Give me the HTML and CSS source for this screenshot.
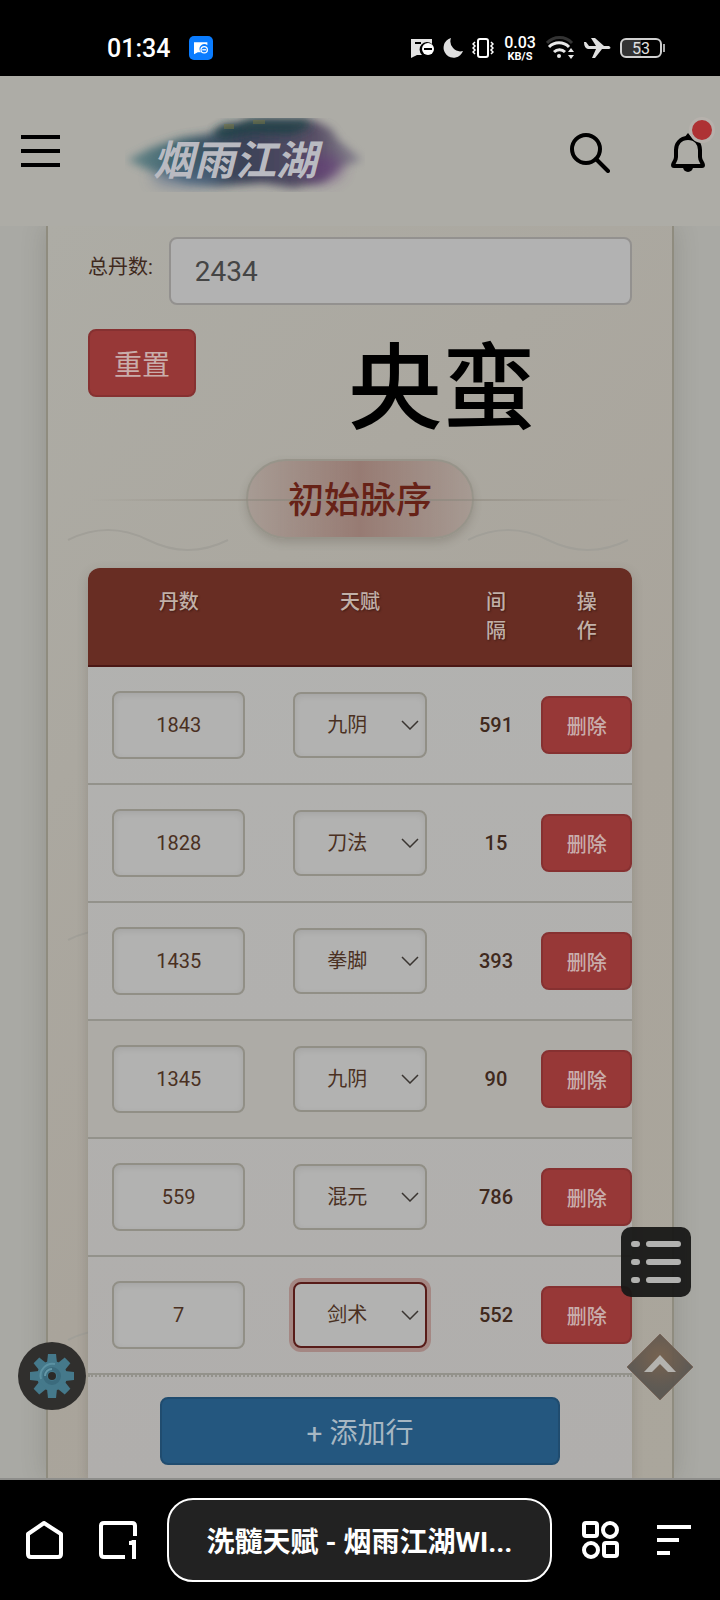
FILE: index.html
```
<!DOCTYPE html>
<html lang="zh-CN">
<head>
    <meta charset="UTF-8">
    <meta name="viewport" content="width=device-width, initial-scale=1.0">
    <title>洗髓天赋 - 烟雨江湖WIKI</title>
    <link rel="stylesheet" href="styles.css">
</head>
<body>
    <div class="status-bar">
        <span class="clock">01:34</span>
        <span class="app-badge">
            <svg width="14" height="13" viewBox="0 0 22 20">
                <path d="M0 0h21v5a7 7 0 0 0-10 11H6l-6 3z" fill="#fff"/>
                <circle cx="16" cy="12" r="5" fill="none" stroke="#fff" stroke-width="2"/>
                <path d="M13 12h6" stroke="#fff" stroke-width="2"/>
            </svg>
        </span>
        <div class="status-icons">
            <svg width="23" height="20" viewBox="0 0 23 20">
                <path d="M0 1h21v5a7 7 0 0 0-10 11H6l-6 3z" fill="#e4e4e4"/>
                <path d="M4 5h6" stroke="#000" stroke-width="2"/>
                <circle cx="17" cy="11" r="6" fill="#fff"/>
                <path d="M13 11h8" stroke="#000" stroke-width="2"/>
            </svg>
            <svg width="20" height="20" viewBox="0 0 20 20">
                <path d="M8 0A10 10 0 1 0 20 13 10 10 0 0 1 8 0z" fill="#e0e0e0"/>
            </svg>
            <svg width="22" height="20" viewBox="0 0 22 20" fill="none" stroke="#fff">
                <rect x="6" y="1" width="10" height="18" rx="2" stroke-width="2"/>
                <path d="M3 4l-2 2 2 2-2 2 2 2-2 2 2 2M19 4l2 2-2 2 2 2-2 2 2 2-2 2" stroke-width="1.5"/>
            </svg>
            <span class="speed"><b>0.03</b><small>KB/S</small></span>
            <svg width="29" height="24" viewBox="0 0 29 24" fill="none">
                <path d="M1 7a17 17 0 0 1 25 0" stroke="#333" stroke-width="3"/>
                <path d="M3 11a14 14 0 0 1 20 0M8 16a8 8 0 0 1 11 0" stroke="#e8e8e8" stroke-width="3"/>
                <circle cx="13" cy="20" r="2" fill="#e8e8e8"/>
                <path d="M22 16l3-4 3 4zM22 19h6l-3 4z" fill="#e8e8e8"/>
            </svg>
            <svg width="27" height="22" viewBox="0 0 27 22">
                <path d="M0 5l2 0 3 4h7L7 1h4l9 8h5q3 2 0 3h-7l-7 9H8l4-9H4Q0 11 0 5z" fill="#e0e0e0"/>
            </svg>
            <span class="battery">53</span>
        </div>
    </div>

    <header class="site-header">
        <button class="icon-btn menu-btn" aria-label="菜单">
            <svg width="39" height="34" viewBox="0 0 39 34" stroke="#000" stroke-width="4">
                <path d="M0 3h39M0 17h39M0 31h39"/>
            </svg>
        </button>
        <a class="logo" href="#">
            <svg width="240" height="74" viewBox="0 0 240 74">
                <defs>
                    <linearGradient id="ink" x1="0" x2="1">
                        <stop offset="0" stop-color="#5f8286"/>
                        <stop offset=".2" stop-color="#2d5966"/>
                        <stop offset=".5" stop-color="#292f4b"/>
                        <stop offset=".8" stop-color="#4a3f5b"/>
                        <stop offset="1" stop-color="#8a8792"/>
                    </linearGradient>
                    <filter id="soft" x="-10%" y="-20%" width="120%" height="140%">
                        <feGaussianBlur stdDeviation="4"/>
                    </filter>
                    <filter id="softer" x="-50%" y="-50%" width="200%" height="200%">
                        <feGaussianBlur stdDeviation="7"/>
                    </filter>
                </defs>
                <path d="M2 42l24-12 30-10 28-4 20-9 36-4h50l16 8 8 12 24 19-24 8-16 14-30 6-30-5-42 3-34-4-34-10z" fill="url(#ink)" opacity=".85" filter="url(#soft)"/>
                <ellipse cx="62" cy="60" rx="36" ry="9" fill="#55698a" opacity=".6" filter="url(#softer)"/>
                <ellipse cx="196" cy="50" rx="22" ry="14" fill="#653b78" opacity=".6" filter="url(#softer)"/>
                <path d="M88 14l12-8 10 2 14-7h58l4 8-20 8-40-2-30 6z" fill="#1f4044" opacity=".8" filter="url(#soft)"/>
                <path d="M99 6h10v5h-10zM128 2h12v4h-12z" fill="#77753f" opacity=".5"/>
                <text class="logo-text" x="28" y="57">烟雨江湖</text>
            </svg>
        </a>
        <div class="header-actions">
            <button class="icon-btn" aria-label="搜索">
                <svg width="40" height="40" viewBox="0 0 40 40" fill="none" stroke="#000" stroke-width="4" stroke-linecap="round">
                    <circle cx="16" cy="16" r="14"/>
                    <path d="M26 26l12 12"/>
                </svg>
            </button>
            <button class="icon-btn bell" aria-label="通知">
                <svg width="36" height="40" viewBox="0 0 36 40">
                    <path d="M18 0l4 5h-8z"/>
                    <path d="M18 5C10 5 6 11 6 17v7c0 4-3 6-3 8 0 1 0 1 1 1h28c1 0 1 0 1-1 0-2-3-4-3-8v-7c0-6-4-12-12-12z" fill="none" stroke="#000" stroke-width="4"/>
                    <path d="M13 34h10a5 5 0 0 1-10 0z"/>
                </svg>
                <span class="dot"></span>
            </button>
        </div>
    </header>

    <main class="content">
        <div class="panel">
            <svg class="waves">
                <defs>
                    <pattern id="wave" x="0" y="234" width="400" height="400" patternUnits="userSpaceOnUse">
                        <path d="M20 80Q60 60 100 80T180 80" fill="none" stroke="#a19f98" stroke-width="2"/>
                    </pattern>
                </defs>
                <rect width="100%" height="100%" fill="url(#wave)"/>
            </svg>

            <div class="total-row">
                <label for="total">总丹数:</label>
                <input type="text" id="total" value="2434">
            </div>
            <div class="reset-row">
                <button class="btn btn-danger">重置</button>
                <span class="mark">央蛮</span>
            </div>

            <div class="section-title">
                <h2>初始脉序</h2>
            </div>

            <div class="table-card">
                <table>
                    <colgroup>
                        <col class="wide"><col class="wide"><col><col>
                    </colgroup>
                    <thead>
                        <tr><th>丹数</th><th>天赋</th><th>间<br>隔</th><th>操<br>作</th></tr>
                    </thead>
                    <tbody>
                        <tr>
                            <td><input type="text" aria-label="丹数" value="1843"></td>
                            <td><div class="select"><select aria-label="天赋"><option>九阴</option></select><svg viewBox="0 0 18 10"><path d="M1 1l8 8 8-8"/></svg></div></td>
                            <td class="gap">591</td>
                            <td class="action"><button class="btn-delete">删除</button></td>
                        </tr>
                        <tr>
                            <td><input type="text" aria-label="丹数" value="1828"></td>
                            <td><div class="select"><select aria-label="天赋"><option>刀法</option></select><svg viewBox="0 0 18 10"><path d="M1 1l8 8 8-8"/></svg></div></td>
                            <td class="gap">15</td>
                            <td class="action"><button class="btn-delete">删除</button></td>
                        </tr>
                        <tr>
                            <td><input type="text" aria-label="丹数" value="1435"></td>
                            <td><div class="select"><select aria-label="天赋"><option>拳脚</option></select><svg viewBox="0 0 18 10"><path d="M1 1l8 8 8-8"/></svg></div></td>
                            <td class="gap">393</td>
                            <td class="action"><button class="btn-delete">删除</button></td>
                        </tr>
                        <tr class="tinted">
                            <td><input type="text" aria-label="丹数" value="1345"></td>
                            <td><div class="select"><select aria-label="天赋"><option>九阴</option></select><svg viewBox="0 0 18 10"><path d="M1 1l8 8 8-8"/></svg></div></td>
                            <td class="gap">90</td>
                            <td class="action"><button class="btn-delete">删除</button></td>
                        </tr>
                        <tr>
                            <td><input type="text" aria-label="丹数" value="559"></td>
                            <td><div class="select"><select aria-label="天赋"><option>混元</option></select><svg viewBox="0 0 18 10"><path d="M1 1l8 8 8-8"/></svg></div></td>
                            <td class="gap">786</td>
                            <td class="action"><button class="btn-delete">删除</button></td>
                        </tr>
                        <tr>
                            <td><input type="text" aria-label="丹数" value="7"></td>
                            <td><div class="select active"><select aria-label="天赋"><option>剑术</option></select><svg viewBox="0 0 18 10"><path d="M1 1l8 8 8-8"/></svg></div></td>
                            <td class="gap">552</td>
                            <td class="action"><button class="btn-delete">删除</button></td>
                        </tr>
                    </tbody>
                </table>
                <div class="add-row">
                    <button class="btn btn-add">+ 添加行</button>
                </div>
            </div>
        </div>

        <!-- floating buttons -->
        <button class="float settings" aria-label="设置">
            <svg width="44" height="44" viewBox="0 0 44 44">
                <g fill="#45798b">
                    <circle cx="22" cy="22" r="15"/>
                    <path id="tooth" d="M18 0h8l1 9H17z"/>
                    <use href="#tooth" transform="rotate(45 22 22)"/>
                    <use href="#tooth" transform="rotate(90 22 22)"/>
                    <use href="#tooth" transform="rotate(135 22 22)"/>
                    <use href="#tooth" transform="rotate(180 22 22)"/>
                    <use href="#tooth" transform="rotate(225 22 22)"/>
                    <use href="#tooth" transform="rotate(270 22 22)"/>
                    <use href="#tooth" transform="rotate(315 22 22)"/>
                </g>
                <path d="M11 25a12 12 0 0 1 14-15" fill="none" stroke="#5b91a2" stroke-width="2"/>
                <circle cx="22" cy="22" r="7" fill="none" stroke="#3b6b7d" stroke-width="4"/>
                <path d="M15 22a7 7 0 0 1 7-7" fill="none" stroke="#6397a7" stroke-width="2"/>
                <circle cx="22" cy="22" r="4" fill="#2b2a28"/>
            </svg>
        </button>
        <button class="float toc" aria-label="目录">
            <svg width="50" height="42" viewBox="0 0 50 42" stroke="#b2b2b0" stroke-width="6" stroke-linecap="round">
                <path d="M3 3h3M18 3h29M3 21h3M18 21h29M3 39h3M18 39h29"/>
            </svg>
        </button>
        <button class="float to-top" aria-label="返回顶部">
            <svg width="68" height="68" viewBox="0 0 68 68">
                <defs>
                    <radialGradient id="diamond" cx=".5" cy=".35" r=".5">
                        <stop offset="0" stop-color="#75604d"/>
                        <stop offset="1" stop-color="#5a5651"/>
                    </radialGradient>
                </defs>
                <path d="M34 1l33 33-33 33L1 34z" fill="url(#diamond)" stroke="#776458"/>
                <path d="M18 39l16-17 16 17h-8l-8-8-8 8z" fill="#b5b4b1"/>
            </svg>
        </button>
    </main>

    <nav class="browser-bar">
        <div class="bar-left">
            <button class="icon-btn" aria-label="主页">
                <svg width="37" height="38" viewBox="0 0 37 38" fill="none" stroke="#fff" stroke-width="4" stroke-linejoin="round">
                    <path d="M18 2l17 11v20q0 3-3 3H5q-3 0-3-3V13z"/>
                </svg>
            </button>
            <button class="icon-btn" aria-label="标签页">
                <svg width="38" height="38" viewBox="0 0 38 38" fill="none" stroke="#fff" stroke-width="4">
                    <path d="M36 15V5q0-3-3-3H5Q2 2 2 5v28q0 3 3 3h21M30 22q5 0 5-3v19"/>
                </svg>
            </button>
        </div>
        <button class="tab-title">洗髓天赋 - 烟雨江湖WI...</button>
        <div class="bar-right">
            <button class="icon-btn" aria-label="应用">
                <svg width="37" height="38" viewBox="0 0 37 38" fill="none" stroke="#fff" stroke-width="4">
                    <rect x="2" y="2" width="13" height="13" rx="2"/>
                    <circle cx="28" cy="9" r="7"/>
                    <circle cx="9" cy="29" r="7"/>
                    <rect x="22" y="22" width="13" height="13" rx="2"/>
                </svg>
            </button>
            <button class="icon-btn" aria-label="更多">
                <svg width="34" height="32" viewBox="0 0 34 32" stroke="#fff" stroke-width="4">
                    <path d="M0 3h34M0 16h22M0 29h13"/>
                </svg>
            </button>
        </div>
    </nav>
</body>
</html>
```
FILE: styles.css
```
* {
    box-sizing: border-box;
}

body {
    margin: 0;
    min-height: 100vh;
    display: flex;
    flex-direction: column;
    background-color: #000;
    color: #3f291d;
    font-family: Roboto, "Noto Sans CJK SC", sans-serif;
    font-size: 20px;
}

svg {
    display: block;
}

button,
input,
select {
    font-family: inherit;
    margin: 0;
}

.icon-btn {
    background: none;
    border: none;
    padding: 0;
}

/* status bar */
.status-bar {
    display: flex;
    align-items: center;
    height: 76px;
    padding: 20px 55px 0 107px;
    color: #fff;
}

.clock {
    font-size: 25px;
    font-weight: 500;
}

.app-badge {
    display: flex;
    align-items: center;
    justify-content: center;
    width: 24px;
    height: 24px;
    margin-left: 19px;
    border-radius: 5px;
    background-color: #0a7cff;
}

.status-icons {
    display: flex;
    align-items: center;
    gap: 9px;
    margin-left: auto;
}

.speed {
    display: flex;
    flex-direction: column;
    align-items: center;
    width: 34px;
}

.speed b {
    font-size: 16px;
    line-height: 17px;
    font-weight: 500;
}

.speed small {
    font-size: 11px;
    line-height: 12px;
    font-weight: 700;
}

.battery {
    position: relative;
    width: 42px;
    height: 20px;
    margin-right: 3px;
    border: 2px solid #d0d0d0;
    border-radius: 6px;
    background: linear-gradient(90deg, #333 50%, #000 50%);
    color: #e0e0e0;
    font-size: 16px;
    line-height: 17px;
    text-align: center;
}

.battery::after {
    content: "";
    position: absolute;
    right: -5px;
    top: 4px;
    width: 2px;
    height: 8px;
    background-color: #aaa;
}

/* header */
.site-header {
    display: flex;
    align-items: center;
    height: 150px;
    padding: 0 14px 0 21px;
    background-color: #adaca6;
}

.logo {
    margin: 8px 0 0 65px;
}

.logo-text {
    font-size: 41px;
    font-weight: 700;
    font-style: italic;
    fill: #b9bac1;
}

.header-actions {
    display: flex;
    gap: 60px;
    margin-left: auto;
}

.header-actions svg {
    margin-top: 4px;
}

.bell {
    position: relative;
}

.dot {
    position: absolute;
    top: -12px;
    right: -9px;
    width: 26px;
    height: 26px;
    border: 3px solid #b6b1ac;
    border-radius: 50%;
    background-color: #ae3234;
}

/* content */
.content {
    position: relative;
    flex: 1;
    display: flex;
    flex-direction: column;
    border-bottom: 2px solid #8e8e8b;
    background-color: #a9a9a4;
    overflow: hidden;
}

.panel {
    position: relative;
    flex: 1;
    display: flex;
    flex-direction: column;
    margin: 0 46px;
    padding: 11px 40px 0;
    border: solid #8f8c7f;
    border-width: 0 2px;
    background: linear-gradient(135deg, #adaca5 0%, #aba8a0 30%, #a9a49b 60%, #aaa69c 100%);
    box-shadow: 0 0 24px rgba(60, 60, 50, 0.2);
}

.waves {
    position: absolute;
    top: 0;
    left: 0;
    width: 100%;
    height: 100%;
}

.total-row {
    position: relative;
    display: flex;
    align-items: center;
    gap: 16px;
}

.total-row label {
    padding-bottom: 12px;
}

.total-row input {
    flex: 1;
    min-width: 0;
    height: 68px;
    padding: 0 24px;
    border: 2px solid #93918f;
    border-radius: 8px;
    background-color: #b2b2b2;
    color: #454545;
    font-size: 28px;
}

.reset-row {
    position: relative;
    margin-top: 24px;
}

.btn {
    height: 68px;
    border-radius: 8px;
    font-size: 28px;
}

.btn-danger {
    padding: 0 24px;
    border: 2px solid #863131;
    background-color: #973837;
    color: #c9adab;
    display: block;
}

/* handwritten mark over the form */
.mark {
    position: absolute;
    top: 14px;
    left: 260px;
    color: #000;
    font-size: 94px;
    line-height: 94px;
    font-weight: 500;
}

.section-title {
    position: relative;
    margin-top: 62px;
    text-align: center;
}

.section-title::before {
    content: "";
    position: absolute;
    top: 40px;
    left: 0;
    right: 0;
    height: 2px;
    background: linear-gradient(90deg, transparent, #8e897f, transparent);
}

.section-title h2 {
    display: inline-block;
    vertical-align: top;
    height: 80px;
    margin: 0;
    padding: 2px 40px 0;
    border: 2px solid #97948a;
    border-radius: 40px;
    background: linear-gradient(90deg, rgba(160, 135, 128, 0.4), rgba(146, 112, 104, 0.8), rgba(160, 135, 128, 0.4));
    box-shadow: 0 4px 8px rgba(70, 60, 50, 0.2);
    color: #672217;
    font-size: 36px;
    line-height: 76px;
    font-weight: 500;
}

.table-card {
    position: relative;
    flex: 1;
    margin-top: 29px;
    border-radius: 12px 12px 0 0;
    background: linear-gradient(180deg, #b2b2b0, #b0aeac);
    box-shadow: 0 4px 12px rgba(60, 50, 40, 0.2);
    overflow: hidden;
}

table {
    width: 100%;
    table-layout: fixed;
    border-spacing: 0;
}

.wide {
    width: 33.33%;
}

th {
    padding: 20px 0 19px;
    border-bottom: 2px solid #4b1815;
    background-color: #682d23;
    color: #c1b0a8;
    line-height: 29px;
    font-weight: 500;
    vertical-align: top;
    text-shadow: 1px 1px 2px rgba(0, 0, 0, 0.4);
}

td {
    padding: 24px;
    border-bottom: 2px solid #93928b;
    text-align: center;
}

tr.tinted td {
    background-color: #adaba6;
}

td input,
td select {
    display: block;
    width: 100%;
    border: 2px solid #918f86;
    border-radius: 8px;
    background-color: #b2b2b1;
    box-shadow: inset 0 2px 6px rgba(0, 0, 0, 0.08);
    color: #4a3022;
    font-size: 20px;
}

td input {
    height: 68px;
    padding: 0;
    text-align: center;
}

.select {
    position: relative;
}

.select select {
    appearance: none;
    height: 66px;
    padding: 0 56px 0 32px;
    text-overflow: clip;
}

.select svg {
    position: absolute;
    top: 28px;
    right: 8px;
    width: 18px;
    height: 10px;
    fill: none;
    stroke: #3a3531;
    stroke-width: 1.5;
}

.select.active select {
    border-color: #581c19;
    box-shadow: 0 0 0 4px #a48783;
}

td.gap {
    padding: 0;
    font-weight: 500;
}

td.action {
    padding: 0;
}

.btn-delete {
    display: block;
    width: 100%;
    height: 58px;
    padding: 0;
    border: 2px solid #863131;
    border-radius: 8px;
    background-color: #973837;
    color: #c9adab;
    font-size: 20px;
    font-weight: 500;
}

.add-row {
    padding: 20px 72px 12px;
    border-top: 2px dotted #93928b;
}

.btn-add {
    width: 100%;
    border: 2px solid #204c6f;
    background-color: #24577f;
    color: #a7b7c3;
}

/* floating buttons */
.float {
    position: absolute;
    display: flex;
    align-items: center;
    justify-content: center;
    padding: 0;
    border: none;
}

.settings {
    left: 18px;
    bottom: 68px;
    width: 68px;
    height: 68px;
    border-radius: 50%;
    background-color: #302f2d;
}

.toc {
    right: 29px;
    bottom: 181px;
    width: 70px;
    height: 70px;
    border-radius: 10px;
    background-color: rgba(24, 24, 23, 0.95);
}

.to-top {
    right: 26px;
    bottom: 77px;
    background: none;
    opacity: 0.95;
}

/* browser bar */
.browser-bar {
    display: flex;
    align-items: center;
    gap: 30px;
    height: 120px;
    padding: 0 29px 0 26px;
}

.bar-left,
.bar-right {
    display: flex;
    align-items: center;
    gap: 36px;
}

.bar-right {
    gap: 38px;
}

.tab-title {
    flex: 1;
    min-width: 0;
    height: 84px;
    padding: 0;
    border: 2px solid #fff;
    border-radius: 26px;
    background-color: #222;
    color: #fff;
    font-size: 28px;
    font-weight: 700;
}
```
